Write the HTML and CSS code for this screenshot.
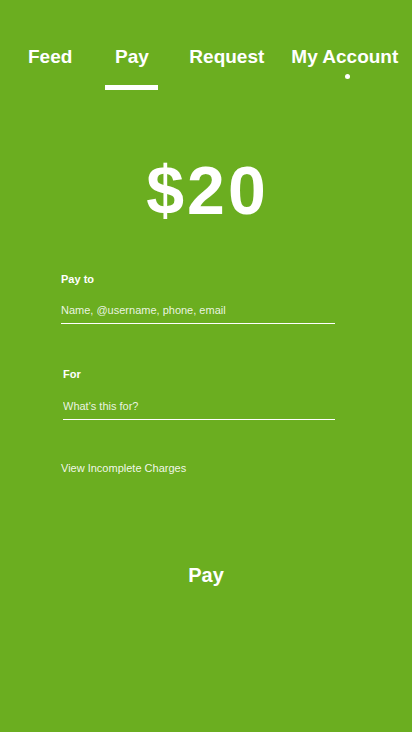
FILE: index.html
```html
<!DOCTYPE html>
<html>
<head>
<meta charset="utf-8">
<link rel="stylesheet" href="styles.css">
</head>
<body>
<div class="screen">
  <nav class="tabs">
    <div class="tab tab-feed"><span class="tab-label">Feed</span></div>
    <div class="tab tab-pay"><span class="tab-label">Pay</span><span class="tab-bar"></span></div>
    <div class="tab tab-request"><span class="tab-label">Request</span></div>
    <div class="tab tab-account"><span class="tab-label">My Account</span><span class="tab-dot"></span></div>
  </nav>
  <div class="amount">$20</div>
  <form class="form">
    <div class="field field-to">
      <label class="field-label">Pay to</label>
      <input class="field-input" type="text" placeholder="Name, @username, phone, email">
    </div>
    <div class="field field-for">
      <label class="field-label">For</label>
      <input class="field-input" type="text" placeholder="What's this for?">
    </div>
    <a class="incomplete">View Incomplete Charges</a>
  </form>
  <div class="pay-btn">Pay</div>
</div>
</body>
</html>
```
FILE: styles.css
```css
html, body {
  margin: 0;
  padding: 0;
  background: #6bae20;
}
body {
  font-family: "Liberation Sans", Arial, sans-serif;
  color: #ffffff;
}
.screen {
  width: 412px;
  height: 732px;
  background: #6bae20;
  overflow: hidden;
}
.tabs {
  display: flex;
  align-items: flex-start;
  padding: 46px 0 0 28px;
  height: 44px;
}
.tab {
  display: flex;
  flex-direction: column;
  align-items: center;
}
.tab-label {
  font-size: 19px;
  line-height: 22px;
  font-weight: 700;
  white-space: nowrap;
}
.tab-pay { margin-left: 33px; }
.tab-request { margin-left: 31px; }
.tab-account { margin-left: 27px; }
.tab-bar {
  width: 53px;
  height: 5px;
  margin-top: 17px;
  background: #ffffff;
}
.tab-dot {
  width: 5px;
  height: 5px;
  margin-top: 6px;
  margin-left: 6px;
  border-radius: 50%;
  background: #ffffff;
}
.amount {
  margin-top: 66px;
  text-align: center;
  font-size: 68px;
  line-height: 68px;
  font-weight: 700;
  letter-spacing: 3px;
  text-indent: 3px;
}
.form {
  display: flex;
  flex-direction: column;
  margin: 49px 0 0 61px;
  width: 274px;
}
.field {
  display: flex;
  flex-direction: column;
}
.field-for {
  margin-top: 44px;
  padding-left: 2px;
}
.field-label {
  font-size: 11px;
  line-height: 13px;
  font-weight: 700;
}
.field-input {
  display: block;
  margin: 17px 0 0;
  padding: 0 0 6px;
  height: 14px;
  border: none;
  border-bottom: 1px solid #ffffff;
  background: transparent;
  color: #ffffff;
  font-family: "Liberation Sans", Arial, sans-serif;
  font-size: 11px;
  line-height: 14px;
  outline: none;
}
.field-for .field-input { margin-top: 18px; }
.field-input::placeholder {
  color: rgba(255, 255, 255, 0.88);
}
.incomplete {
  margin-top: 42px;
  font-size: 11px;
  line-height: 13px;
  color: rgba(255, 255, 255, 0.92);
}
.pay-btn {
  margin-top: 88px;
  text-align: center;
  font-size: 20px;
  line-height: 24px;
  font-weight: 700;
}
```
